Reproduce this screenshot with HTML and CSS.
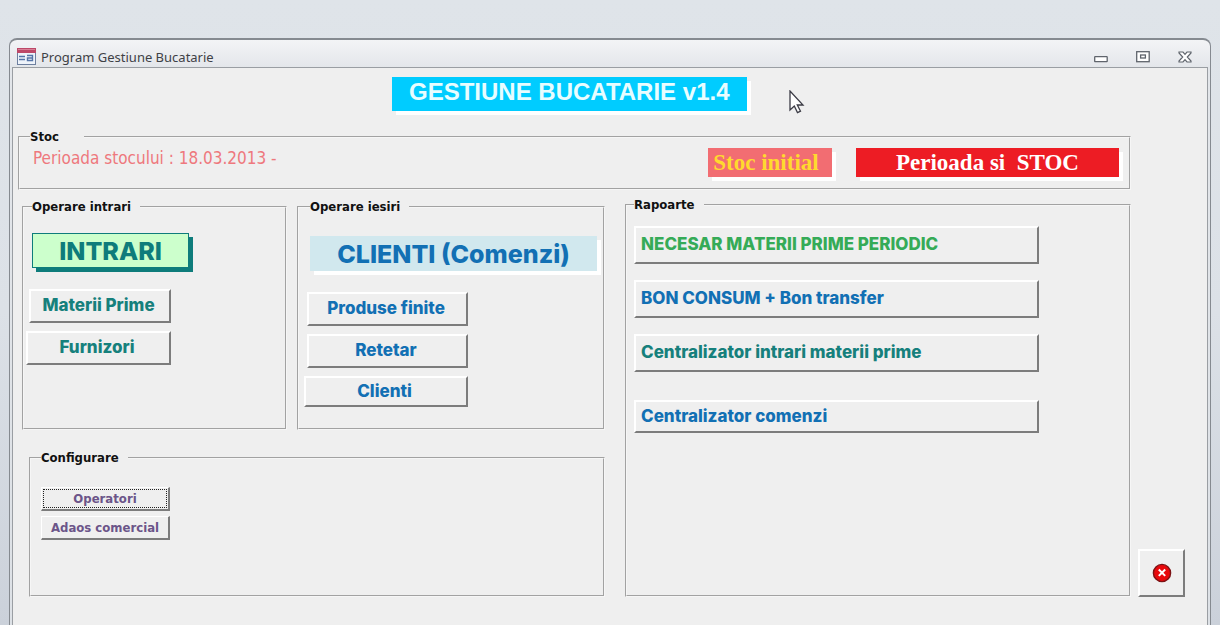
FILE: index.html
```html
<!DOCTYPE html>
<html lang="ro">
<head>
<meta charset="utf-8">
<title>Program Gestiune Bucatarie</title>
<link rel="stylesheet" href="styles.css">
</head>
<body>
<main class="window">
  <header class="titlebar">
    <svg class="form-icon" width="19" height="17" viewBox="0 0 19 17" aria-hidden="true">
      <rect x="0.5" y="0.5" width="18" height="16" fill="#eef3fa" stroke="#6d7f9f"/>
      <rect x="0" y="0" width="19" height="5" fill="#bd4868"/>
      <rect x="1" y="1" width="17" height="1" fill="#d98097"/>
      <path d="M2 8.500h6M2 11.500h6" stroke="#5474a8" stroke-width="1.400"/>
      <path d="M10 7.500h5.500v5h-5v-2.500h5" fill="none" stroke="#5474a8" stroke-width="1.400"/>
    </svg>
    <span class="title">Program Gestiune Bucatarie</span>
    <div class="controls">
      <button class="control" aria-label="Minimize"><svg width="14" height="12" viewBox="0 0 14 12"><rect x="0.700" y="5.700" width="12.500" height="5" rx="0.500" fill="#fff" stroke="#5f646c" stroke-width="1.300"/></svg></button>
      <button class="control" aria-label="Restore"><svg width="14" height="12" viewBox="0 0 14 12"><rect x="0.700" y="0.700" width="12.500" height="10" fill="#fff" stroke="#5f646c" stroke-width="1.300"/><rect x="4.600" y="4" width="4.800" height="3" fill="#fff" stroke="#5f646c" stroke-width="1.300"/></svg></button>
      <button class="control" aria-label="Close"><svg width="14" height="12" viewBox="0 0 14 12"><path d="M1 1h4l2 2.300L9 1h4v1L9.300 6l3.700 4v1H9L7 8.700 5 11H1v-1l3.700-4L1 2z" fill="#fff" stroke="#5f646c" stroke-width="1.200"/></svg></button>
    </div>
  </header>

  <div class="form">
    <h1 class="banner">GESTIUNE BUCATARIE v1.4</h1>

    <div class="body">
      <div class="groups">
        <fieldset class="group stock">
          <legend class="legend wide">Stoc</legend>
          <div class="stock-row">
            <p class="period">Perioada stocului : 18.03.2013 -</p>
            <button class="flat initial">Stoc initial</button>
            <button class="flat interval">Perioada si&nbsp; STOC</button>
          </div>
        </fieldset>

        <div class="columns">
          <div class="left">
            <div class="pair">
              <fieldset class="group group-in">
                <legend class="legend">Operare intrari</legend>
                <button class="flat feature entries">INTRARI</button>
                <div class="stack stack-in">
                  <button class="push teal">Materii Prime</button>
                  <button class="push teal full">Furnizori</button>
                </div>
              </fieldset>
              <fieldset class="group group-out">
                <legend class="legend">Operare iesiri</legend>
                <button class="flat feature clients">CLIENTI (Comenzi)</button>
                <div class="stack stack-out">
                  <button class="push blue">Produse finite</button>
                  <button class="push blue">Retetar</button>
                  <button class="push blue full low">Clienti</button>
                </div>
              </fieldset>
            </div>
            <fieldset class="group config">
              <legend class="legend">Configurare</legend>
              <div class="config-list">
                <button class="push small focused">Operatori</button>
                <button class="push small">Adaos comercial</button>
              </div>
            </fieldset>
          </div>
          <fieldset class="group reports">
            <legend class="legend">Rapoarte</legend>
            <div class="report-list">
              <button class="push report green">NECESAR MATERII PRIME PERIODIC</button>
              <button class="push report blue">BON CONSUM + Bon transfer</button>
              <button class="push report teal">Centralizator intrari materii prime</button>
              <button class="push report blue last">Centralizator comenzi</button>
            </div>
          </fieldset>
        </div>
      </div>
      <button class="push exit" aria-label="Iesire">
        <svg width="20" height="20" viewBox="0 0 20 20"><circle cx="10" cy="10" r="8.600" fill="#e8090c" stroke="#7c1214" stroke-width="1.400"/><path d="M6.800 6.500l6.400 6.400M13.200 6.500l-6.400 6.400" stroke="#fff" stroke-width="2"/></svg>
      </button>
    </div>
  </div>
</main>
<svg class="pointer" width="16" height="24" viewBox="0 0 16 24" aria-hidden="true"><path d="M1 1v19l4.300-4 3.200 6.600 3-1.400-3.200-6.200H14z" fill="#fff" stroke="#3c3c46" stroke-width="1.300"/></svg>
</body>
</html>
```
FILE: styles.css
```css
* { box-sizing: border-box; }

body {
  margin: 0;
  min-height: 100vh;
  padding: 38px 9px 0;
  display: flex;
  background: linear-gradient(#dfe4e9, #dce1e7 50%, #cbd1da);
  font-family: "DejaVu Sans Condensed", "DejaVu Sans", sans-serif;
}

button { font: inherit; cursor: default; }

.window {
  flex: 1;
  display: flex;
  flex-direction: column;
  padding: 0 2px;
  border: 1px solid #858a90;
  border-top-width: 2px;
  border-bottom: 0;
  border-radius: 8px 8px 0 0;
  background: linear-gradient(#f3f4f6, #e3e6ea 28px, #dde1e6);
}

.titlebar {
  height: 27px;
  display: flex;
  align-items: center;
  gap: 5px;
  padding: 6px 16px 0 5px;
}

.title {
  font: 13px/20px "Noto Sans", "Open Sans", sans-serif;
  color: #3e4146;
}

.controls { margin-left: auto; display: flex; gap: 28px; }

.control { display: flex; padding: 0; border: 0; background: none; }

.form {
  flex: 1;
  padding: 9px 22px 27px 5px;
  border: 1px solid #9a9ea3;
  border-bottom: 0;
  background: #efefef;
}

.banner {
  width: fit-content;
  margin: 0 auto 18px 374px;
  padding: 0 17px 4px;
  background: #00ccff;
  box-shadow: 4px 4px #fff;
  color: #e8fdff;
  font: bold 24px/30px "Liberation Sans", Arial, sans-serif;
}

.body { display: flex; align-items: flex-end; gap: 7px; }

.groups { flex: 1; }

.group {
  min-width: 0;
  margin: 0;
  padding: 0 10px;
  border: 2px groove #f6f6f6;
}

.legend {
  padding: 0 9px 0 0;
  color: #111;
  font-size: 13px;
  font-weight: bold;
  line-height: 16px;
}

.legend.wide { padding-right: 25px; }

.stock { height: 61px; }

.stock-row { display: flex; align-items: flex-start; padding-top: 3px; }

.period {
  flex: 1;
  margin: 0;
  padding-left: 3px;
  color: #ee787d;
  font-size: 17px;
  line-height: 20px;
}

.flat {
  padding: 0;
  border: 0;
  box-shadow: 4px 4px #fff;
  white-space: nowrap;
}

.initial, .interval {
  height: 29px;
  font: bold 23px/28px "Liberation Serif", "Times New Roman", serif;
}

.initial { width: 124px; margin-right: 24px; padding-right: 8px; background: #f26d72; color: #ffd92e; }

.interval { width: 263px; background: #ed1c24; color: #fff; }

.columns {
  display: grid;
  grid-template-columns: 587fr 506fr;
  gap: 20px;
  margin-top: 7px;
}

.left { display: flex; flex-direction: column; gap: 20px; padding: 2px 0 0 4px; }

.pair { display: grid; grid-template-columns: 265fr 308fr; gap: 10px; height: 231px; }

.group-in { padding: 0 8px; }

.group-out { padding: 0 6px 0 11px; }

.feature {
  display: block;
  height: 35px;
  margin: 18px 0 0;
  font: 800 25px/32px Inter, "Liberation Sans", sans-serif;
}

.entries {
  width: 157px;
  border: 1px solid #0e7c7b;
  background: #ccffcc;
  color: #0e7c7b;
  box-shadow: 4px 4px #0e7c7b;
}

.clients { width: 100%; margin-top: 21px; background: #d1e8ee; color: #1270b4; }

.stack { display: flex; flex-direction: column; align-items: flex-end; gap: 8px; margin: 21px 0 0 -6px; }

.stack-in { width: 145px; }

.stack-out { width: 164px; }

.push {
  width: calc(100% - 3px);
  height: 34px;
  padding: 0 3px 2px 0;
  border: solid;
  border-width: 2px;
  border-color: #fff #7c7c7c #7c7c7c #fff;
  background: #efefef;
  font: 800 17px/20px Inter, "Liberation Sans", sans-serif;
  white-space: nowrap;
}

.push.full { width: 100%; }

.push.low { height: 31px; }

.teal { color: #16807c; }
.blue { color: #1270b4; }
.green { color: #35ab57; }

.config { flex: 1; margin-left: 7px; }

.config-list { display: flex; flex-direction: column; gap: 5px; width: 129px; padding-top: 21px; }

.push.small {
  position: relative;
  width: 100%;
  height: 24px;
  padding: 0;
  border-width: 1px 2px 2px 1px;
  color: #6b5589;
  font: bold 13px/16px "DejaVu Sans Condensed", "DejaVu Sans", sans-serif;
}

.focused::after {
  content: "";
  position: absolute;
  inset: 1px;
  border: 1px dotted #222;
}

.reports { height: 400px; padding: 0 7px; }

.report-list { display: flex; flex-direction: column; gap: 16px; padding-top: 13px; }

.push.report { width: 83%; height: 38px; padding-left: 5px; text-align: left; }

.push.report.last { height: 33px; margin-top: 12px; }

.push.exit {
  width: 47px;
  height: 48px;
  display: flex;
  align-items: center;
  justify-content: center;
  padding: 0;
}

.pointer { position: absolute; left: 789px; top: 90px; }
```
